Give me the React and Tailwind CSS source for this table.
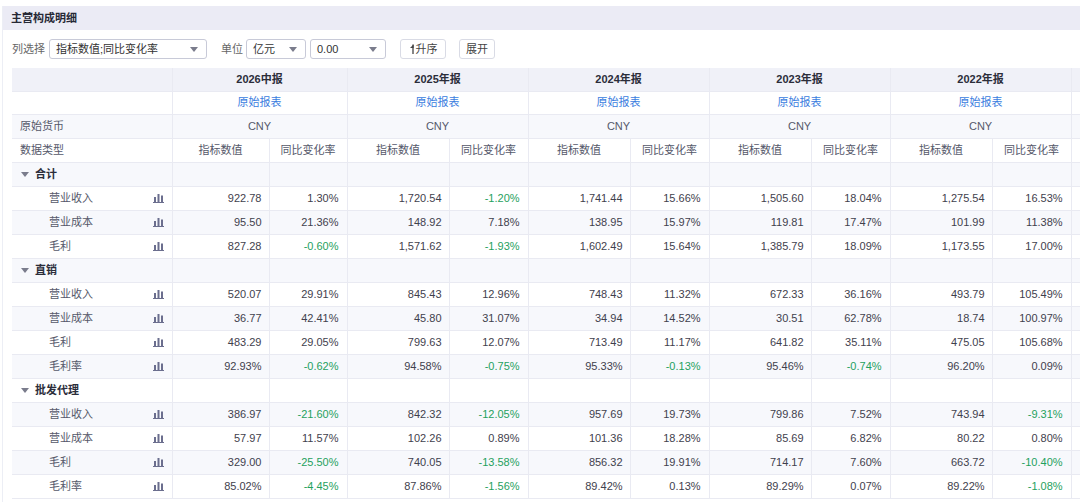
import React from "react"

const years = ["2026中报", "2025年报", "2024年报", "2023年报", "2022年报", ""]

const groups = [
  {
    name: "合计",
    rows: [
      { label: "营业收入", v: [["922.78", "1.30%"], ["1,720.54", "-1.20%"], ["1,741.44", "15.66%"], ["1,505.60", "18.04%"], ["1,275.54", "16.53%"]] },
      { label: "营业成本", v: [["95.50", "21.36%"], ["148.92", "7.18%"], ["138.95", "15.97%"], ["119.81", "17.47%"], ["101.99", "11.38%"]] },
      { label: "毛利", v: [["827.28", "-0.60%"], ["1,571.62", "-1.93%"], ["1,602.49", "15.64%"], ["1,385.79", "18.09%"], ["1,173.55", "17.00%"]] },
    ],
  },
  {
    name: "直销",
    rows: [
      { label: "营业收入", v: [["520.07", "29.91%"], ["845.43", "12.96%"], ["748.43", "11.32%"], ["672.33", "36.16%"], ["493.79", "105.49%"]] },
      { label: "营业成本", v: [["36.77", "42.41%"], ["45.80", "31.07%"], ["34.94", "14.52%"], ["30.51", "62.78%"], ["18.74", "100.97%"]] },
      { label: "毛利", v: [["483.29", "29.05%"], ["799.63", "12.07%"], ["713.49", "11.17%"], ["641.82", "35.11%"], ["475.05", "105.68%"]] },
      { label: "毛利率", v: [["92.93%", "-0.62%"], ["94.58%", "-0.75%"], ["95.33%", "-0.13%"], ["95.46%", "-0.74%"], ["96.20%", "0.09%"]] },
    ],
  },
  {
    name: "批发代理",
    rows: [
      { label: "营业收入", v: [["386.97", "-21.60%"], ["842.32", "-12.05%"], ["957.69", "19.73%"], ["799.86", "7.52%"], ["743.94", "-9.31%"]] },
      { label: "营业成本", v: [["57.97", "11.57%"], ["102.26", "0.89%"], ["101.36", "18.28%"], ["85.69", "6.82%"], ["80.22", "0.80%"]] },
      { label: "毛利", v: [["329.00", "-25.50%"], ["740.05", "-13.58%"], ["856.32", "19.91%"], ["714.17", "7.60%"], ["663.72", "-10.40%"]] },
      { label: "毛利率", v: [["85.02%", "-4.45%"], ["87.86%", "-1.56%"], ["89.42%", "0.13%"], ["89.29%", "0.07%"], ["89.22%", "-1.08%"]] },
    ],
  },
]

function Caret() {
  return (
    <svg width="8" height="5" viewBox="0 0 8 5">
      <path d="M0 0 H8 L4 5 Z" fill="#7a7c8c" />
    </svg>
  )
}

function ChartIcon() {
  return (
    <svg width="11" height="10" viewBox="0 0 11 10">
      <rect x="1" y="4" width="2" height="5" fill="#6b6e8e" />
      <rect x="4.5" y="1" width="2" height="8" fill="#6b6e8e" />
      <rect x="8" y="2.5" width="2" height="6.5" fill="#6b6e8e" />
      <rect x="0" y="9" width="11" height="1" fill="#6b6e8e" />
    </svg>
  )
}

function Select({ text, w }) {
  return (
    <div className={`${w} h-[20px] border border-[#c8cad8] rounded-[3px] flex items-center justify-between pl-[6px] pr-[8px] text-[#333]`}>
      <span>{text}</span>
      <Caret />
    </div>
  )
}

const cell = "border-r border-b border-[#e9eaf2]"

function Rate({ s }) {
  const neg = s.startsWith("-")
  return (
    <td className={`${cell} text-right pr-[8px] ${neg ? "text-[#1fa15e]" : "text-[#3f414d]"}`}>{s}</td>
  )
}

export default function App() {
  return (
    <div className="w-[1080px] h-[502px] overflow-hidden bg-white pt-[6px] text-[11px] font-['Liberation_Sans','Noto_Sans_CJK_SC',sans-serif]">
      <div className="ml-[2px] border-l border-[#eceef5] h-full">
        <div className="h-[24px] bg-[#ebebf5] flex items-center pl-[8px] font-bold text-[#262835]">
          主营构成明细
        </div>

        <div className="mt-[9px] h-[20px] flex items-center pl-[9px] text-[#666]">
          <span className="mr-[4px]">列选择</span>
          <Select text="指标数值;同比变化率" w="w-[158px]" />
          <span className="ml-[14px] mr-[3px]">单位</span>
          <Select text="亿元" w="w-[60px]" />
          <div className="w-[4px]" />
          <Select text="0.00" w="w-[76px]" />
          <div className="ml-[14px] h-[20px] w-[46px] border border-[#d9dbe5] rounded-[3px] flex items-center justify-center text-[#444]">
            <svg width="6" height="10" viewBox="0 0 6 10" className="mr-[1px]">
              <path d="M4 0.5 V10" stroke="#444" strokeWidth="1.3" />
              <path d="M4.6 0.5 L1 4 H4.6 Z" fill="#444" />
            </svg>
            升序
          </div>
          <div className="ml-[13px] h-[20px] w-[36px] border border-[#d9dbe5] rounded-[3px] flex items-center justify-center text-[#444]">
            展开
          </div>
        </div>

        <div className="mt-[9px] ml-[9px] overflow-hidden">
          <table className="table-fixed border-collapse w-[1240px]">
            <colgroup>
              <col className="w-[160px]" />
              <col className="w-[97px]" />
              <col className="w-[78px]" />
              {[0, 1, 2, 3, 4].map((i) => (
                <React.Fragment key={i}>
                  <col className="w-[102px]" />
                  <col className="w-[79px]" />
                </React.Fragment>
              ))}
            </colgroup>
            <tbody>
              <tr className="h-[23px] bg-[#f0f1f8] font-bold text-[#2b2d3a]">
                <td className={cell}></td>
                {years.map((y, i) => (
                  <td key={i} colSpan={2} className={`${cell} text-center`}>{y}</td>
                ))}
              </tr>
              <tr className="h-[23px] bg-white">
                <td className={cell}></td>
                {years.map((y, i) => (
                  <td key={i} colSpan={2} className={`${cell} text-center text-[#3a7de0]`}>{y ? "原始报表" : ""}</td>
                ))}
              </tr>
              <tr className="h-[24px] bg-[#f7f8fc] text-[#55586a]">
                <td className={`${cell} pl-[8px]`}>原始货币</td>
                {years.map((y, i) => (
                  <td key={i} colSpan={2} className={`${cell} text-center`}>{y ? "CNY" : ""}</td>
                ))}
              </tr>
              <tr className="h-[24px] bg-white text-[#55586a]">
                <td className={`${cell} pl-[8px]`}>数据类型</td>
                {years.map((y, i) => (
                  <React.Fragment key={i}>
                    <td className={`${cell} text-center`}>{y ? "指标数值" : ""}</td>
                    <td className={`${cell} text-center`}>{y ? "同比变化率" : ""}</td>
                  </React.Fragment>
                ))}
              </tr>
              {groups.map((g, gi) => (
                <React.Fragment key={g.name}>
                  <tr className={`h-[24px] ${gi < 2 ? "bg-[#f7f8fc]" : "bg-white"}`}>
                    <td className={`${cell} pl-[9px]`}>
                      <div className="flex items-center gap-[6px] font-bold text-[#2b2d3a]">
                        <Caret />
                        {g.name}
                      </div>
                    </td>
                    {years.map((y, i) => (
                      <React.Fragment key={i}>
                        <td className={cell}></td>
                        <td className={cell}></td>
                      </React.Fragment>
                    ))}
                  </tr>
                  {g.rows.map((r, ri) => {
                    const base = gi < 2 ? 1 : 0
                    const bg = (ri + base) % 2 === 0 ? "bg-[#f7f8fc]" : "bg-white"
                    return (
                      <tr key={r.label + ri} className={`h-[24px] ${bg}`}>
                        <td className={`${cell} pl-[37px] pr-[8px] text-[#55586a]`}>
                          <div className="flex items-center justify-between">
                            <span>{r.label}</span>
                            <ChartIcon />
                          </div>
                        </td>
                        {r.v.map(([a, b], i) => (
                          <React.Fragment key={i}>
                            <td className={`${cell} text-right pr-[7px] text-[#3f414d]`}>{a}</td>
                            <Rate s={b} />
                          </React.Fragment>
                        ))}
                        <td className={cell}></td>
                        <td className={cell}></td>
                      </tr>
                    )
                  })}
                </React.Fragment>
              ))}
            </tbody>
          </table>
        </div>
      </div>
    </div>
  )
}
